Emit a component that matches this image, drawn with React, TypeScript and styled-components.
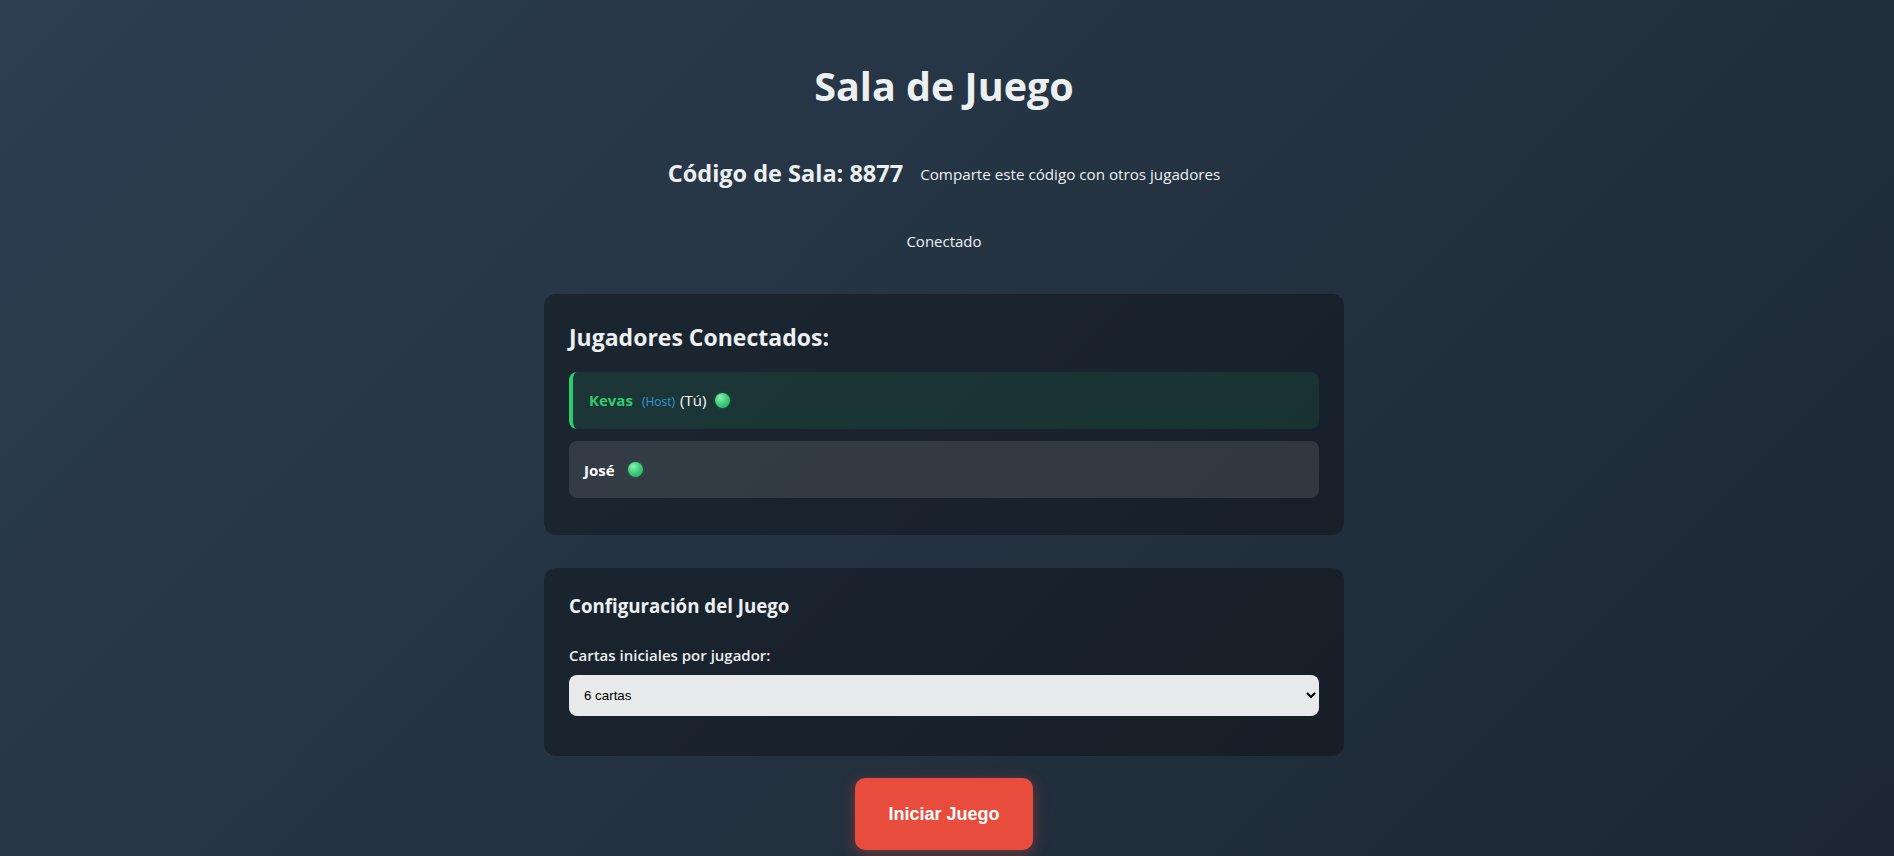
import React from "react";
import styled, { createGlobalStyle } from "styled-components";

const GlobalStyle = createGlobalStyle`
  html, body {
    margin: 0;
    padding: 0;
  }
  body {
    font-family: "Open Sans", "Noto Sans", sans-serif;
    color: #ecf0f1;
    background: linear-gradient(135deg, #2c3e50 0%, #1c2733 100%);
    min-height: 100vh;
  }
`;

const Page = styled.div`
  min-height: 100vh;
  box-sizing: border-box;
  padding-right: 6px;
`;

const Container = styled.main`
  max-width: 800px;
  margin: 0 auto;
  padding: 59px 0 0;
  display: flex;
  flex-direction: column;
  align-items: stretch;
`;

const Title = styled.h1`
  margin: 0;
  text-align: center;
  font-size: 39.5px;
  font-weight: 700;
  line-height: 54px;
  color: #ecf0f1;
`;

const CodeRow = styled.div`
  margin-top: 44px;
  display: flex;
  justify-content: center;
  align-items: center;
  gap: 17px;
`;

const RoomCode = styled.h2`
  margin: 0;
  font-size: 23.5px;
  font-weight: 700;
  line-height: 33px;
`;

const Hint = styled.span`
  font-size: 15.2px;
  line-height: 20px;
  color: #ecf0f1;
`;

const Status = styled.div`
  margin-top: 41px;
  text-align: center;
  font-size: 15px;
  line-height: 20px;
`;

const Card = styled.section<{ $gapTop: number }>`
  margin-top: ${(p) => p.$gapTop}px;
  background: rgba(0, 0, 0, 0.3);
  border-radius: 12px;
  padding: 25px 25px 25px;
`;

const CardHeading = styled.h2`
  margin: 2px 0 18px;
  font-size: 23px;
  font-weight: 700;
  line-height: 33px;
`;

const PlayerRow = styled.div<{ $self?: boolean }>`
  display: flex;
  align-items: center;
  height: 57px;
  box-sizing: border-box;
  margin-bottom: 12px;
  padding: 0 15px;
  border-radius: 8px;
  font-size: 15px;
  background: ${(p) =>
    p.$self ? "rgba(46, 204, 113, 0.1)" : "rgba(255, 255, 255, 0.11)"};
  border-left: ${(p) => (p.$self ? "4px solid #2ecc71" : "none")};
  padding-left: ${(p) => (p.$self ? "16px" : "15px")};
`;

const NameLine = styled.span`
  line-height: 20px;
`;

const PlayerName = styled.span<{ $self?: boolean }>`
  font-weight: 700;
  color: ${(p) => (p.$self ? "#2ecc71" : "#ffffff")};
`;

const HostTag = styled.span`
  margin-left: 9px;
  font-size: 12px;
  color: #3498db;
`;

const YouTag = styled.span`
  margin-left: 5px;
  font-size: 15px;
  color: #ffffff;
`;

const OnlineDot = styled.span<{ $gap: number }>`
  display: inline-block;
  flex: none;
  width: 15px;
  height: 15px;
  margin-left: ${(p) => p.$gap}px;
  border-radius: 50%;
  background: radial-gradient(circle at 35% 30%, #8ef0b4 0%, #3fd07f 45%, #23a85c 100%);
  box-shadow: 0 0 3px rgba(46, 204, 113, 0.35);
`;

const SectionTitle = styled.h3`
  margin: 0 0 26px;
  font-size: 18.7px;
  font-weight: 700;
  line-height: 26px;
`;

const FieldLabel = styled.label`
  display: block;
  margin-bottom: 10px;
  font-size: 15px;
  font-weight: 600;
  line-height: 20px;
`;

const Select = styled.select`
  display: block;
  width: 100%;
  height: 41px;
  margin-bottom: 15px;
  padding: 0 11px;
  border: none;
  border-radius: 8px;
  background: rgba(255, 255, 255, 0.9);
  color: #000;
  font-family: "Liberation Sans", Arial, sans-serif;
  font-size: 13.33px;
`;

const Actions = styled.div`
  margin-top: 22px;
  display: flex;
  justify-content: center;
`;

const StartButton = styled.button`
  padding: 25px 33px;
  border: none;
  border-radius: 10px;
  background: #e74c3c;
  color: #ffffff;
  font-family: "Liberation Sans", Arial, sans-serif;
  font-size: 18px;
  font-weight: 700;
  line-height: 22px;
  cursor: pointer;
  box-shadow: 0 4px 15px rgba(231, 76, 60, 0.4);
`;

export default function App() {
  return (
    <Page>
      <GlobalStyle />
      <Container>
        <Title>Sala de Juego</Title>
        <CodeRow>
          <RoomCode>Código de Sala: 8877</RoomCode>
          <Hint>Comparte este código con otros jugadores</Hint>
        </CodeRow>
        <Status>Conectado</Status>

        <Card $gapTop={43}>
          <CardHeading>Jugadores Conectados:</CardHeading>
          <PlayerRow $self>
            <NameLine>
              <PlayerName $self>Kevas</PlayerName>
              <HostTag>(Host)</HostTag>
              <YouTag>(Tú)</YouTag>
            </NameLine>
            <OnlineDot $gap={9} />
          </PlayerRow>
          <PlayerRow>
            <NameLine>
              <PlayerName>José</PlayerName>
            </NameLine>
            <OnlineDot $gap={13} />
          </PlayerRow>
        </Card>

        <Card $gapTop={33}>
          <SectionTitle>Configuración del Juego</SectionTitle>
          <FieldLabel htmlFor="cartas">Cartas iniciales por jugador:</FieldLabel>
          <Select id="cartas" defaultValue="6">
            <option value="4">4 cartas</option>
            <option value="5">5 cartas</option>
            <option value="6">6 cartas</option>
            <option value="7">7 cartas</option>
            <option value="8">8 cartas</option>
          </Select>
        </Card>

        <Actions>
          <StartButton>Iniciar Juego</StartButton>
        </Actions>
      </Container>
    </Page>
  );
}
